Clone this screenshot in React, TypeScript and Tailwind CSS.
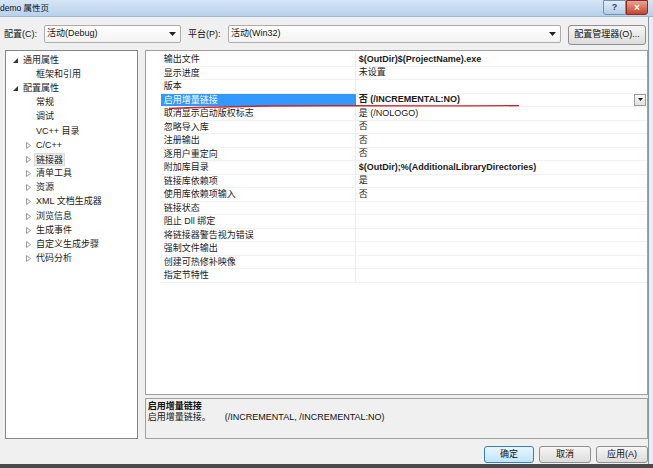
import React from 'react'

const font = { fontFamily: '"Liberation Sans", "Noto Sans CJK SC", sans-serif' }

type TreeItem = { level: number; arrow: 'open' | 'closed' | null; text: string; selected?: boolean }

const treeItems: TreeItem[] = [
  { level: 0, arrow: 'open', text: '通用属性' },
  { level: 1, arrow: null, text: '框架和引用' },
  { level: 0, arrow: 'open', text: '配置属性' },
  { level: 1, arrow: null, text: '常规' },
  { level: 1, arrow: null, text: '调试' },
  { level: 1, arrow: null, text: 'VC++ 目录' },
  { level: 1, arrow: 'closed', text: 'C/C++' },
  { level: 1, arrow: 'closed', text: '链接器', selected: true },
  { level: 1, arrow: 'closed', text: '清单工具' },
  { level: 1, arrow: 'closed', text: '资源' },
  { level: 1, arrow: 'closed', text: 'XML 文档生成器' },
  { level: 1, arrow: 'closed', text: '浏览信息' },
  { level: 1, arrow: 'closed', text: '生成事件' },
  { level: 1, arrow: 'closed', text: '自定义生成步骤' },
  { level: 1, arrow: 'closed', text: '代码分析' },
]

const props: { name: string; value: string; bold?: boolean; selected?: boolean }[] = [
  { name: '输出文件', value: '$(OutDir)$(ProjectName).exe', bold: true },
  { name: '显示进度', value: '未设置' },
  { name: '版本', value: '' },
  { name: '启用增量链接', value: '否 (/INCREMENTAL:NO)', bold: true, selected: true },
  { name: '取消显示启动版权标志', value: '是 (/NOLOGO)' },
  { name: '忽略导入库', value: '否' },
  { name: '注册输出', value: '否' },
  { name: '逐用户重定向', value: '否' },
  { name: '附加库目录', value: '$(OutDir);%(AdditionalLibraryDirectories)', bold: true },
  { name: '链接库依赖项', value: '是' },
  { name: '使用库依赖项输入', value: '否' },
  { name: '链接状态', value: '' },
  { name: '阻止 Dll 绑定', value: '' },
  { name: '将链接器警告视为错误', value: '' },
  { name: '强制文件输出', value: '' },
  { name: '创建可热修补映像', value: '' },
  { name: '指定节特性', value: '' },
]

function DownArrow() {
  return (
    <svg width="7" height="4" viewBox="0 0 7 4">
      <path d="M0 0h7L3.5 4z" fill="#222" />
    </svg>
  )
}

function Combo({ text, width }: { text: string; width: string }) {
  return (
    <div
      className={`${width} h-[18px] border border-[#acacac] rounded-[2px] bg-gradient-to-b from-[#ffffff] to-[#f3f3f3] flex items-center justify-between pl-[2px] pr-[4px]`}
    >
      <span className="text-[9px] text-[#111]">{text}</span>
      <DownArrow />
    </div>
  )
}

function Button({ text, primary }: { text: string; primary?: boolean }) {
  return (
    <div
      className={
        primary
          ? 'w-[50px] h-[17px] rounded-[3px] border border-[#3c7fb1] bg-gradient-to-b from-[#eaf6fd] to-[#bee6fd] flex items-center justify-center text-[9px] text-[#111]'
          : 'w-[52px] h-[17px] rounded-[3px] border border-[#8e8f8f] bg-gradient-to-b from-[#f6f6f6] to-[#dcdcdc] flex items-center justify-center text-[9px] text-[#111]'
      }
    >
      {text}
    </div>
  )
}

export default function App() {
  return (
    <div className="w-[653px] h-[468px] flex flex-col bg-[#e9eef4] overflow-hidden" style={font}>
      {/* Title bar */}
      <div className="h-[17px] flex items-start justify-between bg-gradient-to-b from-[#d6e6f6] to-[#b7d1ec] border-b border-[#9fb8d3]">
        <span className="text-[8.5px] text-[#111] leading-[16px]">demo 属性页</span>
        <div className="flex mr-[5px]">
          <div className="w-[23px] h-[15px] border border-[#6f8fb3] rounded-bl-[3px] bg-gradient-to-b from-[#e3eefa] to-[#b6cde6] flex items-center justify-center text-[9px] text-[#345] font-bold">
            ?
          </div>
          <div className="w-[22px] h-[15px] border border-[#8a2a22] rounded-br-[3px] bg-gradient-to-b from-[#e8a493] to-[#c4412b] flex items-center justify-center text-[10px] text-white font-bold">
            ×
          </div>
        </div>
      </div>

      {/* Dialog body */}
      <div className="w-[649px] flex-1 flex flex-col bg-[#f0f0f0] border-r border-[#8d96a3]">
        {/* Toolbar */}
        <div className="h-[33px] flex items-start pt-[8px] pl-[4px] text-[9px] text-[#111]">
          <span className="w-[40px] leading-[18px]">配置(C):</span>
          <Combo text="活动(Debug)" width="w-[137px]" />
          <span className="w-[40px] ml-[7px] leading-[18px]">平台(P):</span>
          <Combo text="活动(Win32)" width="w-[333px]" />
          <div className="ml-[7px] w-[78px] h-[20px] rounded-[3px] border border-[#8e8f8f] bg-gradient-to-b from-[#f6f6f6] to-[#dcdcdc] flex items-center justify-center">
            配置管理器(O)...
          </div>
        </div>

        {/* Main area */}
        <div className="flex h-[389px] pl-[5px] gap-[7px]">
          {/* Tree */}
          <div className="w-[133px] h-full border border-[#828790] bg-white pt-[2px] text-[9px] text-[#1a1a1a]">
            {treeItems.map((it, i) => (
              <div key={i} className="flex items-center h-[14.2px]">
                <div className={it.level === 0 ? 'w-[7px]' : 'w-[20px]'} />
                <div className="w-[10px] flex items-center">
                  {it.arrow === 'open' && (
                    <svg width="5" height="5" viewBox="0 0 5 5">
                      <path d="M5 0V5H0z" fill="#333" />
                    </svg>
                  )}
                  {it.arrow === 'closed' && (
                    <svg width="5" height="7" viewBox="0 0 5 7">
                      <path d="M0.5 0.5L4.5 3.5L0.5 6.5z" fill="none" stroke="#9a9a9a" strokeWidth="1" />
                    </svg>
                  )}
                </div>
                <span
                  className={
                    it.selected
                      ? 'px-[1px] h-[13px] leading-[12px] bg-[#ececec] border border-[#dadada] -ml-[2px]'
                      : 'leading-[13px]'
                  }
                >
                  {it.text}
                </span>
              </div>
            ))}
          </div>

          {/* Right column */}
          <div className="w-[504px] h-full flex flex-col gap-[3px]">
            {/* Property grid */}
            <div className="relative h-[345px] border border-[#a0a0a0] bg-white flex pt-[2px] text-[9px] text-[#1a1a1a]">
              <div className="w-[15px]" />
              <div className="flex-1 flex flex-col">
                {props.map((p, i) => (
                  <div key={i} className="flex h-[13.5px] border-b border-[#f1f1f1]">
                    <div
                      className={
                        p.selected
                          ? 'w-[195px] pl-[3px] leading-[13px] bg-[#3399ff] text-white'
                          : 'w-[195px] pl-[3px] leading-[13px] border-r border-[#ececec]'
                      }
                    >
                      {p.name}
                    </div>
                    <div className="flex-1 flex items-center justify-between pl-[3px] pr-[1px]">
                      <span className={p.bold ? 'font-bold leading-[13px]' : 'leading-[13px]'}>{p.value}</span>
                      {p.selected && (
                        <div className="w-[12px] h-[12px] border border-[#9a9a9a] bg-gradient-to-b from-[#f8f8f8] to-[#e0e0e0] flex items-center justify-center">
                          <svg width="5" height="3" viewBox="0 0 5 3">
                            <path d="M0 0h5L2.5 3z" fill="#222" />
                          </svg>
                        </div>
                      )}
                    </div>
                  </div>
                ))}
              </div>
              {/* hand-drawn red underline */}
              <svg className="absolute left-0 top-0" width="504" height="80" viewBox="0 0 504 80">
                <path d="M23 57.5 Q 90 54.5 200 54.8 T 373 54.6" fill="none" stroke="#c8242c" strokeWidth="1.4" />
              </svg>
            </div>

            {/* Description */}
            <div className="h-[41px] border border-[#a0a0a0] bg-[#f0f0f0] pl-[2px] pt-[2px] text-[9px] text-[#111] leading-[10.5px]">
              <div className="font-bold">启用增量链接</div>
              <div className="flex">
                <span className="w-[77px]">启用增量链接。</span>
                <span>(/INCREMENTAL, /INCREMENTAL:NO)</span>
              </div>
            </div>
          </div>
        </div>

        {/* Buttons */}
        <div className="flex-1 flex items-start justify-end gap-[5px] pt-[7px] pr-[0px]">
          <Button text="确定" primary />
          <Button text="取消" />
          <Button text="应用(A)" />
        </div>
      </div>
      <div className="h-[4px] bg-[#4a4a4a]" />
    </div>
  )
}
